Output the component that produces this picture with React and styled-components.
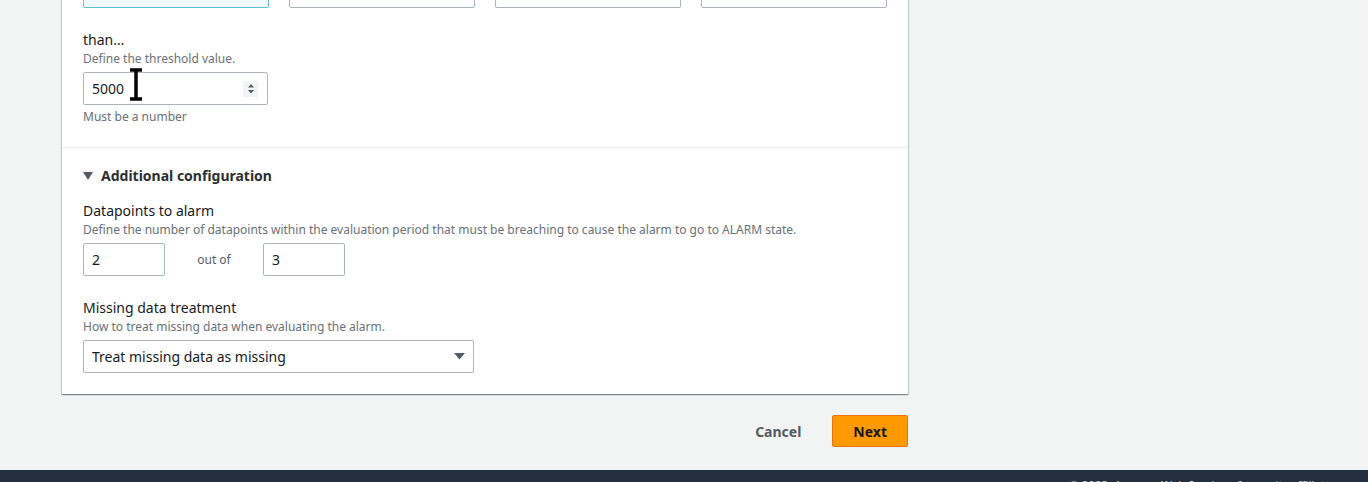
import styled, { createGlobalStyle } from "styled-components";

const Global = createGlobalStyle`
  html, body {
    margin: 0;
    padding: 0;
    background: #f2f3f3;
    font-family: "Noto Sans", "Open Sans", sans-serif;
    color: #16191f;
    overflow: hidden;
  }
`;

const Page = styled.div`
  height: 482px;
  display: flex;
  flex-direction: column;
  overflow: hidden;
`;

const Main = styled.div`
  flex: 1;
  padding-left: 62px;
  width: 846px;
`;

const Panel = styled.div`
  margin-top: -24px;
  background: #fff;
  box-shadow: 0 1px 1px 0 rgba(0, 28, 36, 0.3),
    1px 1px 1px 0 rgba(0, 28, 36, 0.15), -1px 1px 1px 0 rgba(0, 28, 36, 0.15);
`;

const Section = styled.div`
  padding: ${(p) => p.$pad};
  border-bottom: ${(p) => (p.$divider ? "1px solid #eaeded" : "none")};
`;

const BoxRow = styled.div`
  display: grid;
  grid-template-columns: repeat(4, 186px);
  gap: 20px;
`;

const Box = styled.div`
  height: 32px;
  box-sizing: border-box;
  border: 1px solid ${(p) => (p.$active ? "#5fbfd6" : "#aab7b8")};
  background: ${(p) => (p.$active ? "#f1faff" : "#fff")};
  border-radius: 2px;
`;

const Field = styled.div`
  margin-top: ${(p) => p.$top || 0}px;
`;

const Label = styled.div`
  font-size: 14px;
  line-height: 20px;
  color: #16191f;
`;

const Desc = styled.div`
  font-size: 12px;
  line-height: 16px;
  color: #687078;
  margin-top: ${(p) => p.$top || 0}px;
`;

const InputWrap = styled.div`
  position: relative;
  width: ${(p) => p.$w}px;
  height: 33px;
  box-sizing: border-box;
  margin-top: 5px;
  border: 1px solid #aab7b8;
  border-radius: 2px;
  display: flex;
  align-items: center;
  padding: 0 8px;
  font-size: 14px;
  color: #16191f;
  background: #fff;
`;

const Value = styled.span`
  flex: 1;
`;

const Spinner = styled.div`
  width: 15px;
  height: 16px;
  background: #f2f3f3;
  display: flex;
  flex-direction: column;
  align-items: center;
  justify-content: center;
  gap: 2px;
  margin-right: 1px;
`;

const Cursor = styled.svg`
  position: absolute;
  left: 45px;
  top: -5px;
`;

const InlineRow = styled.div`
  display: flex;
  align-items: center;
  margin-top: 5px;
  & > div {
    margin-top: 0;
  }
`;

const OutOf = styled.span`
  font-size: 12px;
  color: #545b64;
  width: 98px;
  text-align: center;
`;

const Expander = styled.div`
  display: flex;
  align-items: center;
  gap: 8px;
  font-size: 14px;
  font-weight: 700;
  line-height: 20px;
  color: #2a2e33;
`;

const Actions = styled.div`
  display: flex;
  justify-content: flex-end;
  align-items: center;
  gap: 10px;
  margin-top: 21px;
`;

const Button = styled.button`
  height: 32px;
  box-sizing: border-box;
  padding: 0 20px;
  font-family: inherit;
  font-size: 14px;
  font-weight: 700;
  border-radius: 2px;
  border: 1px solid ${(p) => (p.$primary ? "#ec7211" : "transparent")};
  background: ${(p) => (p.$primary ? "#ff9900" : "transparent")};
  color: ${(p) => (p.$primary ? "#16191f" : "#545b64")};
  cursor: pointer;
`;

const Footer = styled.div`
  height: 12px;
  box-sizing: border-box;
  background: #232f3e;
  overflow: hidden;
  display: flex;
  justify-content: flex-end;
  padding: 7px 28px 0 0;
  font-size: 11.5px;
  color: #d5dbdb;
  line-height: 16px;
`;

const Tri = ({ up, size = 6, ratio = 0.6 }) => (
  <svg width={size} height={size * ratio} viewBox="0 0 10 6" preserveAspectRatio="none">
    <path d={up ? "M0 6 L5 0 L10 6 Z" : "M0 0 L10 0 L5 6 Z"} fill="#545b64" />
  </svg>
);

export default function App() {
  return (
    <Page>
      <Global />
      <Main>
        <Panel>
          <Section $pad="0 20px 22px 21px" $divider>
            <BoxRow>
              <Box $active />
              <Box />
              <Box />
              <Box />
            </BoxRow>
            <Field $top={22}>
              <Label>than…</Label>
              <Desc $top={1}>Define the threshold value.</Desc>
              <InputWrap $w={185}>
                <Value>5000</Value>
                <Spinner>
                  <Tri up />
                  <Tri />
                </Spinner>
                <Cursor width="14" height="33" viewBox="0 0 14 33">
                  <path
                    d="M1 2 H13 M7 2 V31 M1 31 H13"
                    stroke="#000"
                    strokeWidth="3.5"
                    fill="none"
                  />
                </Cursor>
              </InputWrap>
              <Desc $top={4}>Must be a number</Desc>
            </Field>
          </Section>
          <Section $pad="18px 20px 21px 21px">
            <Expander>
              <Tri size={10} ratio={0.8} />
              Additional configuration
            </Expander>
            <Field $top={15}>
              <Label>Datapoints to alarm</Label>
              <Desc $top={1}>
                Define the number of datapoints within the evaluation period
                that must be breaching to cause the alarm to go to ALARM state.
              </Desc>
              <InlineRow>
                <InputWrap $w={82}>2</InputWrap>
                <OutOf>out of</OutOf>
                <InputWrap $w={82}>3</InputWrap>
              </InlineRow>
            </Field>
            <Field $top={22}>
              <Label>Missing data treatment</Label>
              <Desc $top={1}>How to treat missing data when evaluating the alarm.</Desc>
              <InputWrap $w={391}>
                <Value>Treat missing data as missing</Value>
                <Tri size={11} />
              </InputWrap>
            </Field>
          </Section>
        </Panel>
        <Actions>
          <Button>Cancel</Button>
          <Button $primary>Next</Button>
        </Actions>
      </Main>
      <Footer>© 2023, Amazon Web Services, Inc. or its affiliates.</Footer>
    </Page>
  );
}
